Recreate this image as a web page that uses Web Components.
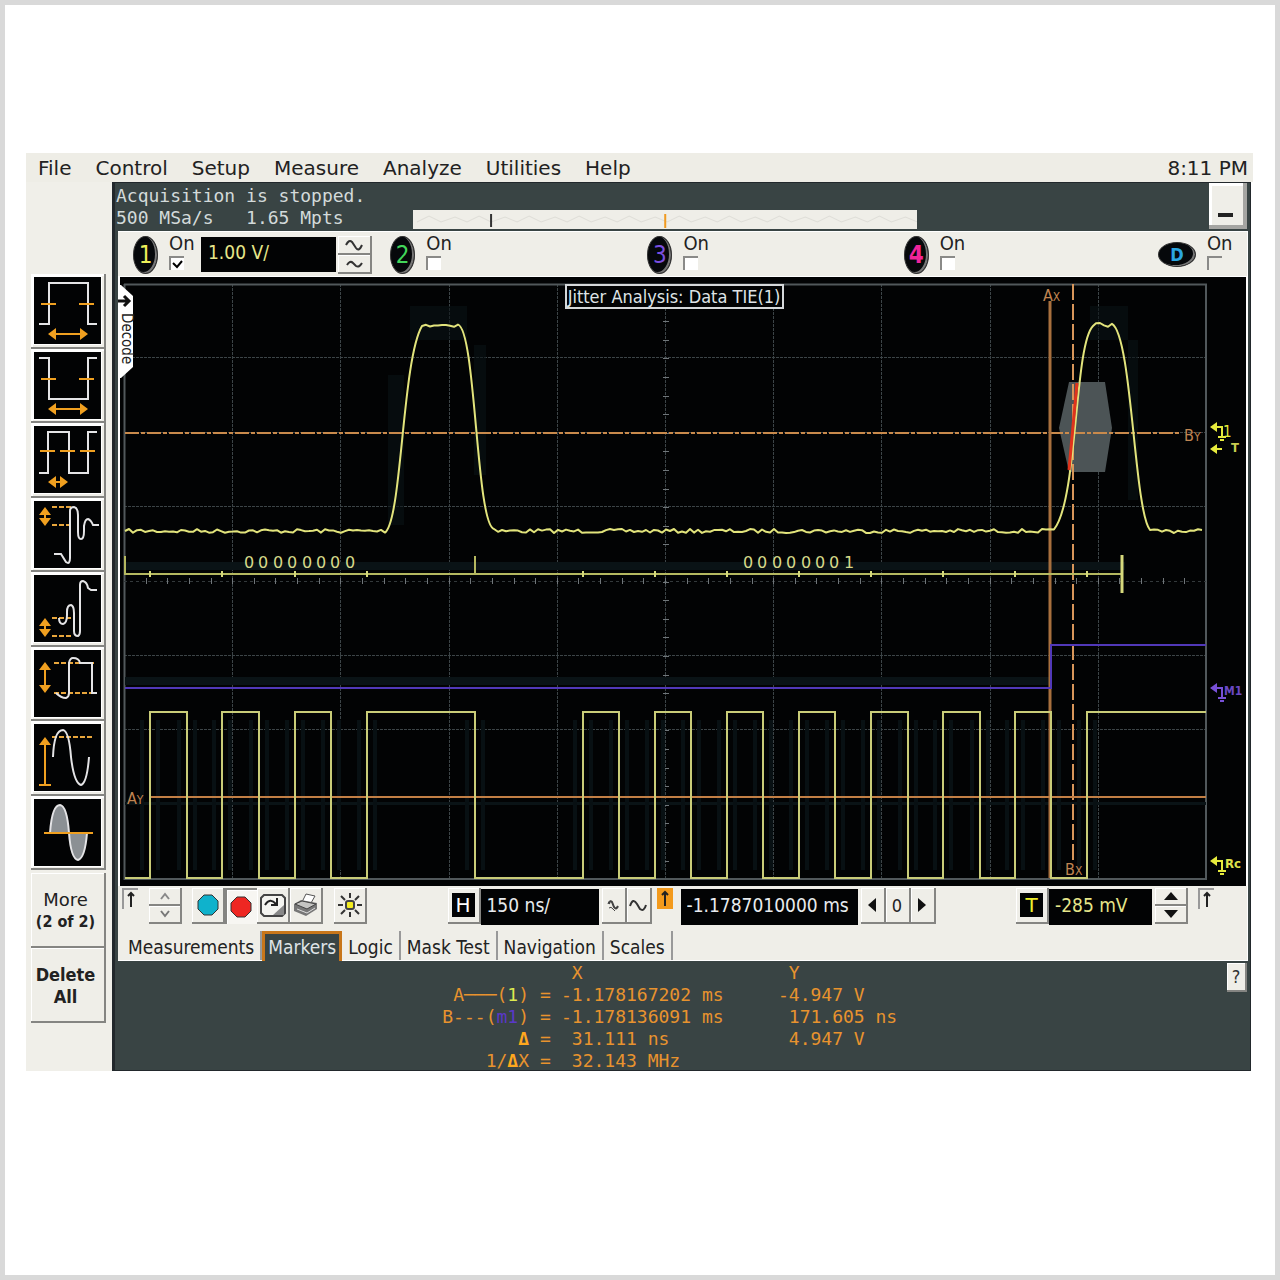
<!DOCTYPE html>
<html lang="en">
<head>
<meta charset="utf-8">
<title>Oscilloscope</title>
<style>
html,body{margin:0;background:#fff}
body{font-family:"DejaVu Sans Condensed","DejaVu Sans","Noto Sans",sans-serif;color:#222}
</style>
</head>
<body>
<scope-app></scope-app>
<script>
const BASE=`<style>
*{box-sizing:border-box}
button,input{font:inherit;color:inherit;margin:0;border-radius:0}
button{padding:0;display:flex;align-items:center;justify-content:center;background:#efeee8;border:0 solid #858582;border-width:0 2px 2px 0;box-shadow:inset 1px 1px #fff}
svg{display:block}
</style>`;
function define(name,render){
  customElements.define(name,class extends HTMLElement{
    connectedCallback(){
      if(this.shadowRoot)return;
      this.attachShadow({mode:'open'}).innerHTML=BASE+render(this);
    }
  });
}

define('scope-menu',()=>`<style>
:host{display:flex;align-items:center;height:29px;background:#eeede6;font-family:"DejaVu Sans",sans-serif;font-size:20px;padding:0 5px 0 12px}
nav{display:flex;gap:24px;flex:1}
a{color:#222;text-decoration:none}
</style><nav>${['File','Control','Setup','Measure','Analyze','Utilities','Help'].map(t=>`<a href="#${t}">${t}</a>`).join('')}</nav><time>8:11 PM</time>`);

const W='fill="none" stroke="#e4e4e6" stroke-width="2"',O='fill="none" stroke="#f0a020" stroke-width="2"',F='fill="#f0a020"',D='fill="none" stroke="#e8a63c" stroke-width="2" stroke-dasharray="5 2"';
const harrow=(a,b,y)=>`<path ${O} d="M${a+4} ${y}H${b-4}"/><path ${F} d="M${a} ${y}l8-6v12zM${b} ${y}l-8-6v12z"/>`;
const varrow=(x,a,b,one)=>`<path ${O} d="M${x} ${a+4}V${b-(one?0:4)}"/><path ${F} d="M${x} ${a}l-6 8h12z${one?'':`M${x} ${b}l-6-8h12z`}"/>`;
const ICONS={
 pwidth:`<path ${W} d="M5 47h10V6h39v41h9"/><path ${O} d="M7 27h15M45 27h15"/>${harrow(14,54,57)}`,
 nwidth:`<path ${W} d="M5 6h10v41h39V6h9"/><path ${O} d="M7 27h15M45 27h15"/>${harrow(14,54,57)}`,
 period:`<path ${W} d="M5 47h9V6h21v41h19V6h9"/><path ${O} d="M6 25h15M26 25h15M46 25h15"/>${harrow(14,34,56)}`,
 over:`<path ${D} d="M18 6h19M18 24h19"/><path ${W} d="M20 53h7l5 8q4 3 4-4V10q0-4 4-4 4 1 4 8v17q0 7 3 7 3 0 3-8v-5q1-7 4-7 3 1 5 6h6"/>${varrow(11,6,25)}`,
 under:`<path ${D} d="M18 43h19M18 61h19"/><path ${W} d="M25 43q0 6 4 6 4-1 4-9v-3q0-7 4-7 3 1 3 8v18q0 5 4 5 2-1 2-5V10q0-4 3-4 4 1 5 7l3 2h6"/>${varrow(11,43,62)}`,
 amp:`<path ${D} d="M20 13h40M20 43h41"/><path ${W} d="M22 43q5 5 10 5 3-1 3-5V13q1-5 4-5 6 0 7 5h12v30h5"/>${varrow(11,12,43)}`,
 top:`<path ${D} d="M18 13h42"/><path ${W} d="M19 33q1-27 10-27 6 1 8 27 3 26 10 28 6-2 8-28"/>${varrow(11,13,61,1)}<path ${O} d="M5 61h12"/>`,
 area:`<path fill="#8b9094" stroke="#e4e4e6" stroke-width="2" d="M16 34Q18 6 26 6q7 1 9 28zM35 34q2 26 9 27 7-2 9-27z"/><path ${O} stroke-width="3" d="M10 34h49"/>`
};
define('measure-button',e=>`<style>
:host{display:block;min-height:0}
button{width:100%;height:100%;padding:3px 2px 3px 3px;box-shadow:inset 2px 2px #fff;justify-content:flex-start;align-items:flex-start}
svg{width:67px;height:67px;background:#020304;box-shadow:0 0 0 1px #fff}
</style><button aria-label="${e.getAttribute('label')}"><svg viewBox="0 0 67 67">${ICONS[e.getAttribute('icon')]}</svg></button>`);

define('text-button',()=>`<style>
:host{display:block;height:75px}
button{width:100%;height:100%;flex-direction:column;line-height:22px;font-size:18px;font-family:"DejaVu Sans",sans-serif;padding:3px 4px 0 0}
</style><button><slot></slot></button>`);

define('side-bar',()=>`<style>
:host{display:flex;flex-direction:column;background:#f0efe9;padding:92px 6px 48px 5px}
.set{display:grid;grid-auto-rows:1fr;height:596px;margin-bottom:3px}
b{font:bold 16px/22px "DejaVu Sans Condensed",sans-serif}
strong{font:bold 18px/22px "DejaVu Sans Condensed",sans-serif}
</style><div class="set">${[['pwidth','Positive width'],['nwidth','Negative width'],['period','Period'],['over','Overshoot'],['under','Preshoot'],['amp','Amplitude'],['top','Peak'],['area','Area']].map(i=>`<measure-button icon="${i[0]}" label="${i[1]}"></measure-button>`).join('')}</div>
<text-button><span>More</span><b>(2 of 2)</b></text-button><text-button><strong>Delete</strong><strong>All</strong></text-button>`);

define('status-area',()=>`<style>
:host{display:flex;height:48px;color:#d3dada;font:18px/22px "DejaVu Sans Mono",monospace}
p{margin:0;white-space:pre;padding-top:2px;flex:297 0 0;min-width:0}
.mem{flex:503 0 0;align-self:flex-end;height:19px;background:#efeee8;margin-bottom:2px}
.mem svg{width:100%;height:19px}
.rest{flex:292 0 0}
button{width:38px;height:46px;border-width:0 4px 4px 0;border-color:#a5a5a2;box-shadow:inset 3px 3px #fff;padding-top:22px}
i{width:15px;height:4px;background:#222}
</style><p>Acquisition is stopped.
500 MSa/s   1.65 Mpts</p><div class="mem"><svg viewBox="0 0 503 19" preserveAspectRatio="none"><path fill="none" stroke="#dfded8" d="M4 12${' l12 -6l12 6l14 -5l12 5'.repeat(10)}"/><path stroke="#333" stroke-width="2" d="M78 4v13"/><path stroke="#f09a20" stroke-width="2" d="M252 4v14"/></svg></div><div class="rest"></div><button aria-label="Minimize"><i></i></button>`);

define('channel-cell',e=>{
 const id=e.getAttribute('ch'),c=e.getAttribute('color'),d=id==='D';
 return `<style>
:host{display:flex;align-items:flex-start;min-width:0;padding-top:4px}
.badge{width:${d?38:25}px;height:${d?25:38}px;margin-top:${d?6:0}px;border-radius:50%;background:#06080b;box-shadow:inset -2px -1px #777;color:${c};font-size:${d?18:24}px;font-weight:${d||id==='4'?'bold':'normal'};display:grid;place-items:center;flex:none;border:1px solid #333}
label{margin-left:11px;width:30px;font-size:20px;line-height:14px;display:block}
input[type=checkbox]{appearance:none;display:block;width:15px;height:14px;margin-top:6px;background:${d?'#efeee8':'#fff'};border:2px solid #8a8a88;border-width:2px 0 0 2px}
input:checked{background:#fff no-repeat center/13px 11px url('data:image/svg+xml,<svg xmlns="http://www.w3.org/2000/svg" viewBox="0 0 13 11"><path d="M2 4l4 4 5-6" fill="none" stroke="black" stroke-width="2"/></svg>')}
.v{width:135px;height:35px;background:#020304;border:0;color:#e6e68a;font-size:19px;padding:0 7px 6px;margin:1px 2px 0 2px}
.b{width:34px;display:grid;grid-template-rows:19px 19px}
</style><span class="badge">${id}</span><label>On<input type="checkbox" ${id==='1'?'checked':''}></label>${id==='1'?`<input class="v" value="1.00 V/" aria-label="Volts per division"><span class="b"><button aria-label="Larger"><svg width="24" height="14" viewBox="0 0 24 14"><path d="M4 7q3-6 6-3l4 6q3 4 6-3" fill="none" stroke="#333" stroke-width="2"/></svg></button><button aria-label="Smaller"><svg width="24" height="14" viewBox="0 0 24 14"><path d="M5 8q3-5 6-2l3 3q3 2 6-3" fill="none" stroke="#333" stroke-width="2"/></svg></button></span>`:''}`;
});

define('channel-strip',()=>`<style>
:host{display:grid;grid-template-columns:257fr 257fr 256fr 254fr 89fr;background:#efeee8;height:46px;padding-left:15px;border-top:1px solid #fff;border-bottom:1px solid #fff}
</style>${[['1','#eef05a'],['2','#42d65a'],['3','#7a4fe0'],['4','#f0249a'],['D','#2ba6e0']].map(c=>`<channel-cell ch="${c[0]}" color="${c[1]}"></channel-cell>`).join('')}`);

function plot(){
 let s='<path d="M118 277h2v609h-2z" fill="#fff"/>';
 const L=124,R=1206,T=284,B=879,dx=108.2,dy=74.4;
 let g='';
 for(let i=1;i<10;i++)g+=`M${Math.round(L+i*dx)+.5} ${T}V${B}`;
 for(let i=1;i<8;i++)if(i!==4)g+=`M${L} ${Math.round(T+i*dy)-.5}H${R}`;
 s+=`<path d="${g}" stroke="#3c4447" stroke-dasharray="3 1"/>`;
 s+=`<path d="M${L} ${T+.5}H${R}V${B}H${L+.5}V${T}" stroke="#51585b" fill="none" stroke-width="2"/>`;
 s+=`<path d="M${L} 581.5H${R}" stroke="#33393b" stroke-dasharray="3 3"/>`;
 let t='';
 for(let x=L+21.64;x<R;x+=21.64)t+=`M${Math.round(x)+.5} 578v6`;
 for(let y=T+18.6;y<B;y+=18.6)t+=`M663 ${Math.round(y)+.5}h6`;
 s+=`<path d="${t}" stroke="#70767a"/>`;
 // faint halo round the pulses and lines
 s+=`<g fill="#0a1316"><path d="M125 677h926v8H125zM125 562h1000v8H125zM125 802h1081v3H125z"/><path d="M410 306h57v34h-57zM388 375h16v150h-16zM474 345h12v130h-12zM1090 306h38v34h-38zM1128 340h10v160h-10z" opacity=".6"/></g>`;
 const ed=[150,187,222,259,295,331,367,475,583,619,655,691,727,763,799,835,871,908,943,980,1015,1051,1087];
 s+='<g stroke="#081013" stroke-width="4">'+ed.map(x=>`<path d="M${x+8} 720V870M${x-8} 720V870"/>`).join('')+'</g>';
 // marker lines
 s+=`<path d="M1069 382H1105L1112 428L1105 472H1069L1059 428Z" fill="#4c5456"/>`;
 s+=`<path d="M125 433H1181" stroke="#c98a4c" stroke-width="2" stroke-dasharray="14 2 4 2"/>`;
 s+=`<path d="M1050 301V878" stroke="#a8703e" stroke-width="3"/><path d="M1073 284V862" stroke="#d8965a" stroke-width="2" stroke-dasharray="16 4"/>`;
 s+=`<path d="M151 797H1206" stroke="#c27f45" stroke-width="2"/>`;
 s+=`<path d="M125 688H1051V645H1206" fill="none" stroke="#5138b8" stroke-width="2"/>`;
 // recovered clock
 let c='M125 878',hi=false;
 for(const x of ed){c+=`H${x}V${hi?878:712}`;hi=!hi;}
 s+=`<path d="${c}H1206" fill="none" stroke="#c9cc78" stroke-width="2"/>`;
 // decoded bus
 s+=`<path d="M125 556V574H1122M475 556V574" fill="none" stroke="#b5b860" stroke-width="2"/><path d="M1122 555V593" stroke="#d6d97c" stroke-width="3"/>`;
 s+=`<path d="${ed.filter((x,i)=>i%2===0&&x<1100).map(x=>`M${x} 571v6`).join('')}" stroke="#d6d97c" stroke-width="2"/>`;
 const bits=(str,x0)=>`<text y="568" font-family="DejaVu Sans,sans-serif" font-size="16" fill="#d6da8a" x="${[...str].map((_,i)=>Math.round(x0+i*14.4)).join(' ')}">${str}</text>`;
 s+=bits('00000000',244)+bits('00000001',743);
 // analog trace
 let seed=7;const rnd=()=>(seed=(seed*16807)%2147483647)/2147483647;
 const flat=(a,b,y,k)=>{let o='';for(let x=a;x<=b;x+=4)o+=`L${x} ${(y+(rnd()-.5)*k).toFixed(1)}`;return o;};
 let w='M125 531'+flat(129,388,531,4)+'C402 520 402 360 422 326'+flat(426,458,325,4)+'C476 330 476 524 494 529'+flat(498,1055,531,4)+'C1078 500 1074 345 1093 326'+flat(1096,1114,325,4)+'C1132 335 1134 510 1150 530'+flat(1154,1205,531,4);
 s+=`<path d="${w}" fill="none" stroke="#e2e47c" stroke-width="2" stroke-linejoin="round"/>`;
 s+=`<path d="M1077 383L1069 470" stroke="#e0341c" stroke-width="3"/>`;
 // labels
 const m=(a,b,x,y)=>`<text x="${x}" y="${y}" font-size="16" fill="#c08552">${a}<tspan font-size="12">${b}</tspan></text>`;
 s+=m('A','X',1043,301)+m('B','X',1065,875)+m('A','Y',127,804)+m('B','Y',1184,441);
 s+=`<path d="M566 285H783V308H566Z" fill="#020304" stroke="#d5d8da" stroke-width="2"/><text x="674" y="303" text-anchor="middle" font-size="18" fill="#dfe3e6">Jitter Analysis: Data TIE(1)</text>`;
 s+=`<path d="M118 285h3l12 11v71l-12 11h-3z" fill="#fff"/><path d="M118 301h11M124 296l5 5-5 5" stroke="#111" stroke-width="3" fill="none"/><text transform="translate(122 313) rotate(90)" font-size="15" fill="#222">Decode</text>`;
 const mk=(x,y,c)=>`<path d="M${x} ${y}l7-5v10z" fill="${c}"/><path d="M${x+5} ${y}h7v9" fill="none" stroke="${c}" stroke-width="2"/><path d="M${x+8} ${y+10}h8M${x+10} ${y+13}h4" stroke="${c}" stroke-width="2"/>`;
 s+=mk(1210,427,'#e6ea3c')+`<text x="1223" y="437" font-size="15" fill="#e6ea3c">1</text><path d="M1210 449l7-5v10zM1215 448h7v2h-7z" fill="#e6ea3c"/><text x="1231" y="452" font-size="13" font-weight="bold" fill="#c9cc50">T</text>`;
 s+=mk(1210,688,'#7850d8')+`<text x="1224" y="695" font-size="12" font-weight="bold" fill="#6a48c4">M1</text>`;
 s+=mk(1210,861,'#e6ea3c')+`<text x="1225" y="868" font-size="13" font-weight="bold" fill="#dfe24a">Rc</text>`;
 return s;
}
define('scope-plot',()=>`<style>
:host{display:block;background:#020304;border-right:1px solid #fff}
svg{width:100%;height:auto;overflow:visible}
</style><svg viewBox="118 277 1128 609" role="img" aria-label="Waveform display">${plot()}</svg>`);

const sv=(w,h,b)=>`<svg width="${w}" height="${h}" viewBox="0 0 ${w} ${h}">${b}</svg>`;
const oct=c=>sv(22,22,`<path d="M7 1h8l6 6v8l-6 6H7l-6-6V7z" fill="${c}" stroke="#333" stroke-width="1"/>`);
const up=sv(12,18,`<path d="M6 2v14M3 5l3-3 3 3" fill="none" stroke="#222" stroke-width="2"/>`);
define('control-row',()=>`<style>
:host{display:flex;align-items:flex-start;height:44px;padding:2px 33px 0 4px;background:#efeee8}
.tag{width:16px;height:21px;border:2px solid #999;border-width:2px 0 0 2px;display:grid;place-items:center;flex:none}
.orange{background:#f39a1c;border:0;margin:0 8px 0 5px}
.spin{display:grid;grid-template-rows:18px 18px;width:33px;flex:none;margin:0 10px 0 11px}
button{height:36px;width:33px;flex:none}
.spin button{height:18px}
.pressed{border-width:2px 0 0 2px;width:32px;padding-right:2px;background:#f7f6f2}
.gap{margin-left:11px}
.n{width:25px}
.zero{font-size:18px}
input{height:36px;border:0;background:#020304;color:#e8ebee;font-size:19px;padding:0 4px 5px 6px;flex:none;margin:1px 3px 0 0}
.time{width:118px}.pos{width:177px}.level{width:103px;color:#e6e68a}
.sp{flex:1}
.l{background:#020304;width:23px;height:24px;display:grid;place-items:center;font:20px/24px "DejaVu Sans",sans-serif;color:#fff}
.t{color:#f0f02c}
.tail{margin-left:0}
</style>
<span class="tag">${up}</span>
<span class="spin"><button aria-label="Up">${sv(12,8,'<path d="M2 7l4-5 4 5" fill="none" stroke="#888" stroke-width="2"/>')}</button><button aria-label="Down">${sv(12,8,'<path d="M2 1l4 5 4-5" fill="none" stroke="#777" stroke-width="2"/>')}</button></span>
<button aria-label="Run">${oct('#0fb2cc')}</button><button class="pressed" aria-label="Stop">${oct('#ee2722')}</button>
<button aria-label="Touch screen">${sv(26,24,'<path d="M4 2h18l3 3v15l-3 3H4l-3-3V5z" fill="#f4f4f0" stroke="#444" stroke-width="2"/><path d="M5 12q5-8 11-1M17 5v7h-6" fill="none" stroke="#222" stroke-width="2"/><path d="M24 12v10H13z" fill="#888"/>')}</button>
<button aria-label="Print">${sv(26,24,'<path d="M9 9L13 1l9 2-4 7z" fill="#fff" stroke="#555"/><path d="M1 11l7-4 16 3v6l-11 7-12-5z" fill="#777"/><path d="M2 11l7-3 14 3-9 5z" fill="#c4c4c2" stroke="#444"/><path d="M4 16l10 4 8-5" stroke="#ddd" fill="none"/>')}</button>
<button class="gap" aria-label="Brightness">${sv(26,26,'<path d="M13 1v5M13 20v5M1 13h5M20 13h5M4 4l4 4M22 4l-4 4M4 22l4-4M22 22l-4-4" stroke="#333" stroke-width="2"/><rect x="9" y="9" width="8" height="8" rx="2" fill="#f4ee20" stroke="#444" stroke-width="2"/>')}</button>
<span class="sp"></span>
<button aria-label="Horizontal"><span class="l">H</span></button>
<input class="time" value="150 ns/" aria-label="Time per division">
<button class="n" aria-label="Slower">${sv(14,20,'<path d="M2 9q1-5 4-2l2 5q2 4 4 0M3 13q2-2 4 1l2 2" fill="none" stroke="#444"/><path d="M3 9q1-4 3-2l2 5q2 3 4-1" fill="none" stroke="#444" stroke-width="2"/>')}</button><button class="n" aria-label="Faster">${sv(20,20,'<path d="M2 11q3-9 7-2l3 5q4 3 6-4" fill="none" stroke="#333" stroke-width="2"/>')}</button>
<span class="tag orange">${up}</span>
<input class="pos" value="-1.1787010000 ms" aria-label="Position">
<button class="n" aria-label="Left">${sv(8,14,'<path d="M8 0v14L0 7z" fill="#111"/>')}</button><button class="n zero">0</button><button class="n" aria-label="Right">${sv(8,14,'<path d="M0 0v14l8-7z" fill="#111"/>')}</button>
<span class="sp"></span>
<button aria-label="Trigger"><span class="l t">T</span></button>
<input class="level" value="-285 mV" aria-label="Trigger level">
<span class="spin tail"><button aria-label="Raise">${sv(14,8,'<path d="M7 0l7 8H0z" fill="#111"/>')}</button><button aria-label="Lower">${sv(14,8,'<path d="M7 8l7-8H0z" fill="#111"/>')}</button></span>
<span class="tag">${up}</span>`);

define('tab-bar',()=>`<style>
:host{display:flex;height:31px;background:#efeee8;border-bottom:1px solid #fff;font-size:19px;padding:1px 0 0 4px}
button{border:0;border-right:2px solid #999;box-shadow:none;padding:2px 6px 0}
button:first-child{border:0;padding:2px 3px 0 6px}
button[aria-selected=true]{background:#394444;color:#dfe3e6;border:3px solid #c8761a;border-bottom:0;padding:0 3px 1px;margin-bottom:-1px}
</style>${['Measurements','Markers','Logic','Mask Test','Navigation','Scales'].map(t=>`<button role="tab" aria-selected="${t==='Markers'}">${t}</button>`).join('')}`);

define('marker-readout',()=>`<style>
:host{display:flex;align-items:flex-start;justify-content:space-between;height:108px;padding-top:1px;color:#e8932e;font:18px/22px "DejaVu Sans Mono",monospace}
table{border-collapse:collapse}
td,th{padding:0;height:22px;font-weight:normal;white-space:pre;text-align:left}
th[scope=row]{text-align:right;width:414px}
th[scope=row]+td{width:32px;padding-left:11px}
td:nth-child(3),th:nth-child(3){width:217px}
.y{color:#dcea50}.m{color:#5a38c8}.d{color:#ffa81e;font-weight:bold}
button{width:20px;height:29px;color:#333;font:18px "DejaVu Sans Condensed",sans-serif;margin-top:1px}
</style><table><thead><tr><th></th><th></th><th scope="col"> X</th><th scope="col"> Y</th></tr></thead><tbody>
<tr><th scope="row">A───(<span class="y">1</span>)</th><td>=</td><td>-1.178167202 ms</td><td>-4.947 V</td></tr>
<tr><th scope="row">B---(<span class="m">m1</span>)</th><td>=</td><td>-1.178136091 ms</td><td> 171.605 ns</td></tr>
<tr><th scope="row"><span class="d">Δ</span></th><td>=</td><td> 31.111 ns</td><td> 4.947 V</td></tr>
<tr><th scope="row">1/<span class="d">Δ</span>X</th><td>=</td><td> 32.143 MHz</td><td></td></tr></tbody></table><button aria-label="Help">?</button>`);

define('scope-app',()=>`<style>
:host{display:block;box-sizing:border-box;border:5px solid #d9d9d9;min-height:100vh;padding:148px 22px 0 21px}
.body{display:grid;grid-template-columns:86px minmax(0,1fr);margin-right:2px}
main{background:#394444;border:solid #22282c;border-width:1px 1px 1px 3px;min-width:0}
status-area{padding:0 3px 0 1px}
.panel{margin:0 2px 0 3px;border-right:1px solid #fff}
marker-readout{margin-right:3px}
</style><scope-menu></scope-menu><div class="body"><side-bar></side-bar><main><status-area></status-area><div class="panel"><channel-strip></channel-strip><scope-plot></scope-plot><control-row></control-row><tab-bar></tab-bar></div><marker-readout></marker-readout></main></div>`);
</script>
</body>
</html>
